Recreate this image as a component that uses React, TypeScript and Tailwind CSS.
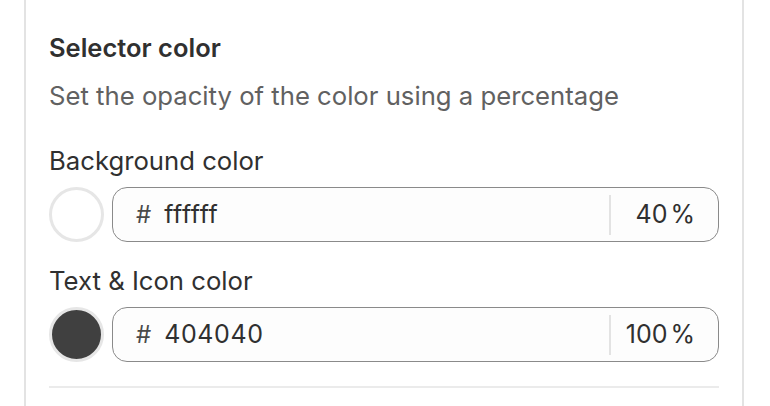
const FONT = "font-['Inter','Noto_Sans',sans-serif]"

type ColorRowProps = {
  label: string
  hex: string
  swatch: string
  opacity: number
}

function ColorRow({ label, hex, swatch, opacity }: ColorRowProps) {
  return (
    <div className="flex flex-col">
      <span className="text-[25.7px] leading-[32px] text-[#303030]">{label}</span>
      <div className="mt-[10px] flex items-center gap-[8px]">
        <span
          className="size-[55px] shrink-0 rounded-full border-[3px] border-[#e6e6e6]"
          style={{ backgroundColor: swatch }}
        />
        <div className="flex h-[55px] flex-1 items-center rounded-[15px] border border-[#8a8a8a] bg-[#fdfdfd] pl-[23px] pr-[23px]">
          <span className="text-[24px] text-[#4a4a4a]">#</span>
          <span className="ml-[13px] flex-1 text-[25px] tracking-[0.6px] text-[#303030]">{hex}</span>
          <span className="h-[40px] w-[2px] bg-[#e3e3e3]" />
          <span className="flex w-[84px] items-center justify-end text-[25px] text-[#303030]">
            {opacity}
            <span className="ml-[3px]">%</span>
          </span>
        </div>
      </div>
    </div>
  )
}

export default function App() {
  return (
    <div className={`h-[406px] w-[770px] overflow-hidden bg-white ${FONT}`}>
      <div className="ml-[24px] h-full w-[720px] border-x-2 border-[#e3e3e3] px-[23px] pt-[32px]">
        <h2 className="text-[25.5px] font-semibold leading-[32px] text-[#303030]">Selector color</h2>
        <p className="mt-[16px] text-[25.7px] leading-[32px] text-[#616161]">
          Set the opacity of the color using a percentage
        </p>
        <div className="mt-[33px] flex flex-col gap-[23px]">
          <ColorRow label="Background color" hex="ffffff" swatch="#ffffff" opacity={40} />
          <ColorRow label="Text & Icon color" hex="404040" swatch="#404040" opacity={100} />
        </div>
        <div className="mt-[24px] h-[2px] w-full bg-[#ebebeb]" />
      </div>
    </div>
  )
}
